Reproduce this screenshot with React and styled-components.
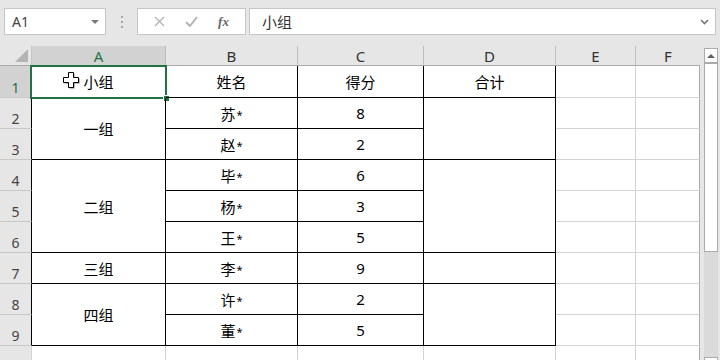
import React from 'react';
import styled, { createGlobalStyle } from 'styled-components';

const GlobalStyle = createGlobalStyle`
  html, body {
    margin: 0;
    padding: 0;
    background: #e6e6e6;
    width: 720px;
    height: 360px;
    overflow: hidden;
    font-family: "Noto Sans", "Noto Sans CJK SC", sans-serif;
  }
`;

const Page = styled.div`
  width: 720px;
  height: 360px;
  overflow: hidden;
  background: #e6e6e6;
`;

const Toolbar = styled.div`
  display: flex;
  align-items: center;
  height: 27px;
  padding: 8px 4px 0 4px;
  margin-bottom: 11px;
`;

const Box = styled.div`
  box-sizing: border-box;
  height: 27px;
  background: #ffffff;
  border: 1px solid #c6c6c6;
  display: flex;
  align-items: center;
`;

const NameBox = styled(Box)`
  width: 102px;
  padding: 0 6px 0 7px;
  justify-content: space-between;
  font-size: 14px;
  color: #444;
`;

const Caret = styled.span`
  width: 0;
  height: 0;
  border-left: 4px solid transparent;
  border-right: 4px solid transparent;
  border-top: 4px solid #7a7a7a;
`;

const Dots = styled.div`
  width: 31px;
  display: flex;
  flex-direction: column;
  align-items: center;
  gap: 3px;
  span {
    width: 2px;
    height: 2px;
    background: #a6a6a6;
  }
`;

const FuncBox = styled(Box)`
  width: 109px;
  justify-content: space-around;
  padding: 0 6px;
  margin-right: 3px;
`;

const Fx = styled.span`
  font-family: "Liberation Serif", serif;
  font-style: italic;
  font-weight: bold;
  font-size: 13px;
  color: #666;
`;

const FormulaBox = styled(Box)`
  flex: 1;
  padding: 0 6px 0 12px;
  justify-content: space-between;
  font-size: 15px;
  color: #333;
`;

const SheetArea = styled.div`
  display: flex;
`;

const Grid = styled.div`
  display: grid;
  width: 700px;
  grid-template-columns: 32px 134px 132px 126px 132px 80px 64px;
  grid-template-rows: 20px 32px repeat(9, 31px);
  background: #ffffff;
`;

const Corner = styled.div`
  background: #e6e6e6;
  border-bottom: 1px solid #ababab;
  border-right: 1px solid #c6c6c6;
  position: relative;
  svg {
    position: absolute;
    right: 3px;
    bottom: 3px;
  }
`;

const ColHead = styled.div`
  box-sizing: border-box;
  background: ${p => (p.$sel ? '#d2d2d2' : '#e6e6e6')};
  color: ${p => (p.$sel ? '#217346' : '#333')};
  border-bottom: 1px solid #ababab;
  border-right: ${p => (p.$last ? 'none' : '1px solid #bdbdbd')};
  display: flex;
  align-items: center;
  justify-content: center;
  font-size: 15px;
  padding-top: 1px;
`;

const RowHead = styled.div`
  box-sizing: border-box;
  background: ${p => (p.$sel ? '#d2d2d2' : '#e6e6e6')};
  color: ${p => (p.$sel ? '#217346' : '#444')};
  border-bottom: 1px solid #c8c8c8;
  border-right: 1px solid ${p => (p.$dark ? '#000' : '#d4d4d4')};
  display: flex;
  align-items: flex-end;
  justify-content: center;
  font-size: 14px;
  line-height: 18px;
`;

const Cell = styled.div`
  box-sizing: border-box;
  position: relative;
  grid-row: span ${p => p.$span || 1};
  border-right: 1px solid ${p => (p.$edge ? '#ababab' : p.$dark ? '#000' : '#d4d4d4')};
  border-bottom: 1px solid ${p => (p.$dark ? '#000' : '#d4d4d4')};
  display: flex;
  align-items: center;
  justify-content: center;
  font-size: 15px;
  color: #000;
  white-space: nowrap;
`;

const Star = styled.span`
  font-size: 11px;
  margin-left: 1px;
  position: relative;
  top: -1px;
`;

const Selection = styled.div`
  position: absolute;
  left: -2px;
  top: -1px;
  right: -2px;
  bottom: -2px;
  border: 2px solid #217346;
  pointer-events: none;
`;

const Handle = styled.div`
  position: absolute;
  right: -5px;
  bottom: -5px;
  width: 5px;
  height: 5px;
  background: #217346;
  border: 1px solid #ffffff;
`;

const Pointer = styled.svg`
  position: absolute;
  left: 31px;
  top: 6px;
`;

const ScrollBar = styled.div`
  width: 20px;
  display: flex;
  flex-direction: column;
  padding: 2px 2px 0 4px;
  box-sizing: border-box;
`;

const ScrollBtn = styled.div`
  box-sizing: border-box;
  height: 15px;
  flex-shrink: 0;
  background: #ffffff;
  border: 1px solid #ababab;
  display: flex;
  align-items: center;
  justify-content: center;
`;

const UpArrow = styled.span`
  width: 0;
  height: 0;
  border-left: 4px solid transparent;
  border-right: 4px solid transparent;
  border-bottom: 4px solid #606060;
`;

const Track = styled.div`
  height: 294px;
  flex-shrink: 0;
  background: #dadada;
`;

const Thumb = styled.div`
  box-sizing: border-box;
  height: 189px;
  background: #ffffff;
  border: 1px solid #ababab;
`;

const columns = ['A', 'B', 'C', 'D', 'E', 'F'];

const table = [
  [{ t: '小组', sel: true }, { t: '姓名' }, { t: '得分' }, { t: '合计' }],
  [{ t: '一组', span: 2 }, { t: '苏*' }, { t: '8' }, { t: '', span: 2 }],
  [{ t: '赵*' }, { t: '2' }],
  [{ t: '二组', span: 3 }, { t: '毕*' }, { t: '6' }, { t: '', span: 3 }],
  [{ t: '杨*' }, { t: '3' }],
  [{ t: '王*' }, { t: '5' }],
  [{ t: '三组' }, { t: '李*' }, { t: '9' }, { t: '' }],
  [{ t: '四组', span: 2 }, { t: '许*' }, { t: '2' }, { t: '', span: 2 }],
  [{ t: '董*' }, { t: '5' }],
];

function Cross() {
  return (
    <Pointer width="17" height="17" viewBox="0 0 17 17">
      <path d="M6.5 1.5h5v5h5v5h-5v5h-5v-5h-5v-5h5z" fill="#777" />
      <path d="M5.5 0.5h5v5h5v5h-5v5h-5v-5h-5v-5h5z" fill="#fff" stroke="#000" strokeWidth="1" />
    </Pointer>
  );
}

function CellText({ text }) {
  if (text.endsWith('*')) {
    return (
      <span>
        {text.slice(0, -1)}
        <Star>*</Star>
      </span>
    );
  }
  return text;
}

function App() {
  return (
    <Page>
      <GlobalStyle />
      <Toolbar>
        <NameBox>
          <span>A1</span>
          <Caret />
        </NameBox>
        <Dots>
          <span />
          <span />
          <span />
        </Dots>
        <FuncBox>
          <svg width="11" height="11" viewBox="0 0 11 11">
            <path d="M1 1l9 9M10 1l-9 9" stroke="#b4b4b4" strokeWidth="1.4" />
          </svg>
          <svg width="13" height="11" viewBox="0 0 13 11">
            <path d="M1 6l4 4 7-9" stroke="#b4b4b4" strokeWidth="2" fill="none" />
          </svg>
          <Fx>fx</Fx>
        </FuncBox>
        <FormulaBox>
          <span>小组</span>
          <svg width="9" height="6" viewBox="0 0 9 6">
            <path d="M1 1l3.5 3.5L8 1" stroke="#777" strokeWidth="1.6" fill="none" />
          </svg>
        </FormulaBox>
      </Toolbar>

      <SheetArea>
        <Grid>
          <Corner>
            <svg width="13" height="13" viewBox="0 0 13 13">
              <path d="M13 0V13H0Z" fill="#b4b4b4" />
            </svg>
          </Corner>
          {columns.map((c, i) => (
            <ColHead key={c} $sel={i === 0} $last={i === columns.length - 1}>{c}</ColHead>
          ))}

          {table.map((row, r) => (
            <React.Fragment key={r}>
              <RowHead $sel={r === 0} $dark>{r + 1}</RowHead>
              {row.map((cell, k) => (
                <Cell key={k} $dark $span={cell.span}>
                  {cell.sel && <Cross />}
                  <CellText text={cell.t} />
                  {cell.sel && (
                    <Selection>
                      <Handle />
                    </Selection>
                  )}
                </Cell>
              ))}
              <Cell />
              <Cell $edge />
            </React.Fragment>
          ))}

          <RowHead>10</RowHead>
          <Cell />
          <Cell />
          <Cell />
          <Cell />
          <Cell />
          <Cell $edge />
        </Grid>

        <ScrollBar>
          <ScrollBtn>
            <UpArrow />
          </ScrollBtn>
          <Track>
            <Thumb />
          </Track>
          <ScrollBtn />
        </ScrollBar>
      </SheetArea>
    </Page>
  );
}

export default App;
